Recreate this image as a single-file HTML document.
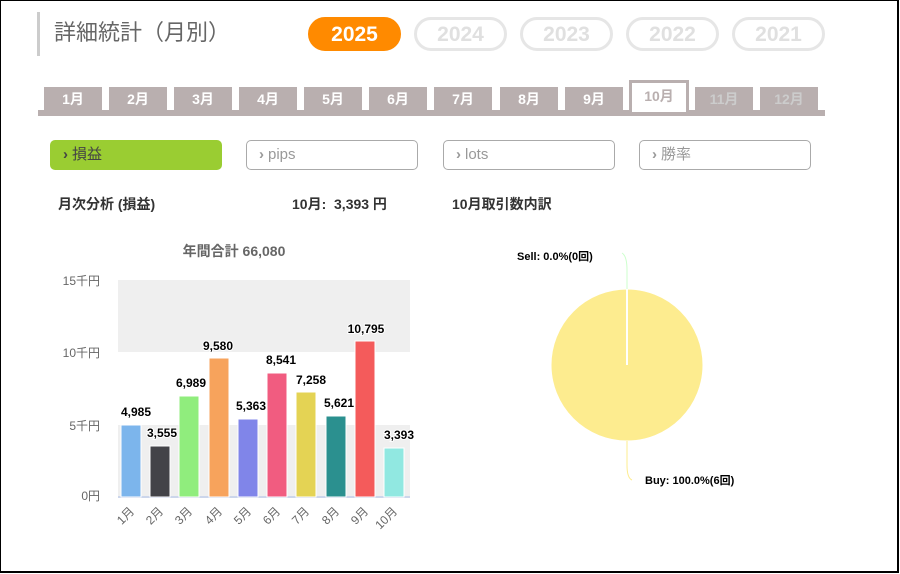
<!DOCTYPE html>
<html><head><meta charset="utf-8"><style>
*{margin:0;padding:0;box-sizing:border-box}
body{width:900px;height:574px;background:#fff;font-family:"Liberation Sans","Noto Sans CJK JP",sans-serif;position:relative;overflow:hidden}
.frame{position:absolute;left:0;top:0;width:899px;height:573px;border:1px solid #000;border-right:2px solid #000;border-bottom:2px solid #000}
.abs{position:absolute}
.title{left:37px;top:12px;height:44px;border-left:3px solid #ccc;padding-left:14px;font-size:22px;color:#666;line-height:42px}
.pill{position:absolute;top:17px;width:93px;height:34px;border-radius:17px;border:3px solid #e6e6e6;color:#e0e0e0;font-weight:bold;font-size:21px;text-align:center;line-height:30px}
.pill.on{background:#ff8a00;border-color:#ff8a00;color:#fff}
.tab{position:absolute;top:87px;width:58px;height:25px;background:#b9afaf;color:#fff;font-weight:bold;font-size:14px;text-align:center;line-height:25px}
.tab.dim{color:#ccc}
.tab.act{top:80px;height:32px;background:#fff;border:3px solid #b9afaf;border-bottom:none;color:#b9afaf;line-height:26px}
.base{left:38px;top:110px;width:787px;height:6px;background:#b9afaf}
.btn{position:absolute;top:140px;width:172px;height:30px;border:1px solid #aaa;border-radius:5px;font-size:15px;color:#999;line-height:28px;padding-left:12px}
.btn b{font-size:15px;margin-right:4px}
.btn.on{background:#9acd32;border-color:#9acd32;color:#444}
.lbl{font-size:14px;font-weight:bold;color:#333;top:194px}
</style></head><body>
<div class="frame"></div>
<div class="abs title">詳細統計（月別）</div>
<div class="pill on" style="left:308px">2025</div>
<div class="pill" style="left:414px">2024</div>
<div class="pill" style="left:520px">2023</div>
<div class="pill" style="left:626px">2022</div>
<div class="pill" style="left:732px">2021</div>
<div class="abs base"></div>
<div class="tab" style="left:44px">1月</div>
<div class="tab" style="left:109px">2月</div>
<div class="tab" style="left:174px">3月</div>
<div class="tab" style="left:239px">4月</div>
<div class="tab" style="left:304px">5月</div>
<div class="tab" style="left:369px">6月</div>
<div class="tab" style="left:434px">7月</div>
<div class="tab" style="left:500px">8月</div>
<div class="tab" style="left:565px">9月</div>
<div class="tab act" style="left:629px;width:60px">10月</div>
<div class="tab dim" style="left:695px">11月</div>
<div class="tab dim" style="left:760px">12月</div>
<div class="btn on" style="left:50px"><b>›</b>損益</div>
<div class="btn" style="left:246px"><b>›</b>pips</div>
<div class="btn" style="left:443px"><b>›</b>lots</div>
<div class="btn" style="left:639px"><b>›</b>勝率</div>
<div class="abs lbl" style="left:58px">月次分析 (損益)</div>
<div class="abs lbl" style="left:292px">10月:&nbsp; 3,393 円</div>
<div class="abs lbl" style="left:452px">10月取引数内訳</div>
<svg class="abs" style="left:0;top:0" width="900" height="574" font-family="Liberation Sans, Noto Sans CJK JP, sans-serif">
<text x="234" y="256" font-size="14" font-weight="bold" fill="#666" text-anchor="middle">年間合計 66,080</text>
<rect x="118" y="280" width="292" height="72" fill="#efefef"/>
<rect x="118" y="425" width="292" height="72" fill="#efefef"/>
<line x1="118" y1="497" x2="410" y2="497" stroke="#ccd6eb" stroke-width="2"/>
<g font-size="12" fill="#666" text-anchor="end">
<text x="100" y="285">15千円</text><text x="100" y="357">10千円</text><text x="100" y="430">5千円</text><text x="100" y="500">0円</text></g>
<g stroke="#fff" stroke-width="1">
<rect x="121" y="425" width="20" height="72" fill="#7cb5ec"/>
<rect x="150" y="446" width="20" height="51" fill="#434348"/>
<rect x="179" y="396" width="20" height="101" fill="#90ed7d"/>
<rect x="209" y="358" width="20" height="139" fill="#f7a35c"/>
<rect x="238" y="419" width="20" height="78" fill="#8085e9"/>
<rect x="267" y="373" width="20" height="124" fill="#f15c80"/>
<rect x="296" y="392" width="20" height="105" fill="#e4d354"/>
<rect x="326" y="416" width="20" height="81" fill="#2b908f"/>
<rect x="355" y="341" width="20" height="156" fill="#f45b5b"/>
<rect x="384" y="448" width="20" height="49" fill="#91e8e1"/></g>
<g font-size="12" font-weight="bold" fill="#000" text-anchor="middle" stroke="#fff" stroke-width="2" paint-order="stroke">
<text x="136" y="416">4,985</text><text x="162" y="437">3,555</text><text x="191" y="387">6,989</text>
<text x="218" y="350">9,580</text><text x="251" y="410">5,363</text><text x="281" y="364">8,541</text>
<text x="311" y="384">7,258</text><text x="339" y="407">5,621</text><text x="366" y="333">10,795</text><text x="399" y="439">3,393</text></g>
<g font-size="12" fill="#666" text-anchor="end">
<text transform="translate(135,512) rotate(-45)">1月</text><text transform="translate(164,512) rotate(-45)">2月</text>
<text transform="translate(193,512) rotate(-45)">3月</text><text transform="translate(223,512) rotate(-45)">4月</text>
<text transform="translate(252,512) rotate(-45)">5月</text><text transform="translate(281,512) rotate(-45)">6月</text>
<text transform="translate(310,512) rotate(-45)">7月</text><text transform="translate(340,512) rotate(-45)">8月</text>
<text transform="translate(369,512) rotate(-45)">9月</text><text transform="translate(398,512) rotate(-45)">10月</text></g>
<circle cx="627" cy="365" r="76" fill="#fdec8f" stroke="#fff"/>
<line x1="627" y1="289" x2="627" y2="365" stroke="#fff" stroke-width="2"/>
<path d="M622 253 Q627 256 627 270 L627 289" fill="none" stroke="#cfc" stroke-width="1"/>
<path d="M627 441 L627 465 Q627 478 632 480" fill="none" stroke="#fdec8f" stroke-width="1"/>
<g font-size="11" font-weight="bold" fill="#000">
<text x="517" y="260">Sell: 0.0%(0回)</text><text x="645" y="484">Buy: 100.0%(6回)</text></g>
</svg>
</body></html>
